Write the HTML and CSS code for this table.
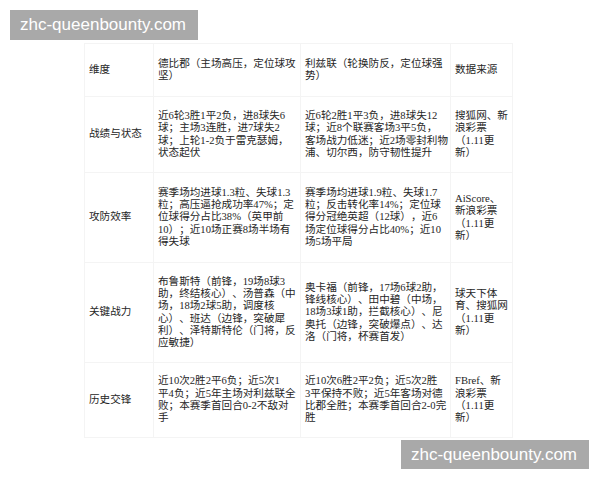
FILE: index.html
```html
<!DOCTYPE html>
<html lang="zh-CN">
<head>
<meta charset="utf-8">
<title>德比郡 vs 利兹联</title>
<link rel="stylesheet" href="styles.css">
</head>
<body>
<div class="wm wm-top">zhc-queenbounty.com</div>
<table class="cmp">
  <colgroup>
    <col class="c1"><col class="c2"><col class="c3"><col class="c4">
  </colgroup>
  <tr class="r0">
    <td>维度</td>
    <td>德比郡（主场高压，定位球攻<br>坚）</td>
    <td>利兹联（轮换防反，定位球强<br>势）</td>
    <td>数据来源</td>
  </tr>
  <tr class="r1">
    <td>战绩与状态</td>
    <td>近6轮3胜1平2负，进8球失6<br>球；主场3连胜，进7球失2<br>球；上轮1-2负于雷克瑟姆，<br>状态起伏</td>
    <td>近6轮2胜1平3负，进8球失12<br>球；近8个联赛客场3平5负，<br>客场战力低迷；近2场零封利物<br>浦、切尔西，防守韧性提升</td>
    <td>搜狐网、新<br>浪彩票<br>（1.11更<br>新）</td>
  </tr>
  <tr class="r2">
    <td>攻防效率</td>
    <td>赛季场均进球1.3粒、失球1.3<br>粒；高压逼抢成功率47%；定<br>位球得分占比38%（英甲前<br>10）；近10场正赛8场半场有<br>得失球</td>
    <td>赛季场均进球1.9粒、失球1.7<br>粒；反击转化率14%；定位球<br>得分冠绝英超（12球），近6<br>场定位球得分占比40%；近10<br>场5场平局</td>
    <td>AiScore、<br>新浪彩票<br>（1.11更<br>新）</td>
  </tr>
  <tr class="r3">
    <td>关键战力</td>
    <td>布鲁斯特（前锋，19场8球3<br>助，终结核心）、汤普森（中<br>场，18场2球5助，调度核<br>心）、班达（边锋，突破犀<br>利）、泽特斯特伦（门将，反<br>应敏捷）</td>
    <td>奥卡福（前锋，17场6球2助，<br>锋线核心）、田中碧（中场，<br>18场3球1助，拦截核心）、尼<br>奥托（边锋，突破爆点）、达<br>洛（门将，杯赛首发）</td>
    <td>球天下体<br>育、搜狐网<br>（1.11更<br>新）</td>
  </tr>
  <tr class="r4">
    <td>历史交锋</td>
    <td>近10次2胜2平6负；近5次1<br>平4负；近5年主场对利兹联全<br>败；本赛季首回合0-2不敌对<br>手</td>
    <td>近10次6胜2平2负；近5次2胜<br>3平保持不败；近5年客场对德<br>比郡全胜；本赛季首回合2-0完<br>胜</td>
    <td>FBref、新<br>浪彩票<br>（1.11更<br>新）</td>
  </tr>
</table>
<div class="wm wm-bottom">zhc-queenbounty.com</div>
</body>
</html>
```

FILE: styles.css
```css
html, body {
  margin: 0;
  padding: 0;
  background: #ffffff;
}
body {
  width: 600px;
  height: 480px;
  position: relative;
  overflow: hidden;
}
.cmp {
  margin: 43px 0 0 84px;
  border-collapse: collapse;
  table-layout: fixed;
  width: 428px;
  font-family: "Liberation Serif", "Noto Sans CJK SC", sans-serif;
  font-size: 10.6px;
  line-height: 12.3px;
  color: #262626;
  text-spacing-trim: space-all;
}
.c1 { width: 69px; }
.c2 { width: 147px; }
.c3 { width: 150px; }
.c4 { width: 62px; }
.cmp td {
  border: 1px solid #f4f4f4;
  padding: 0 3px 0 4px;
  vertical-align: middle;
  text-align: left;
  white-space: nowrap;
}
.r0 { height: 53px; }
.r1 { height: 76px; }
.r2 { height: 90px; }
.r3 { height: 100px; }
.r4 { height: 75px; }
.wm {
  position: absolute;
  background: #a9a9a9;
  color: #ffffff;
  font-family: "Liberation Sans", sans-serif;
  font-size: 17px;
  line-height: 30px;
  height: 30px;
  width: 188px;
  box-sizing: border-box;
  padding-left: 10px;
  white-space: nowrap;
}
.wm-top { left: 10px; top: 10px; }
.wm-bottom { left: 401px; top: 440px; height: 29px; line-height: 29px; }
```
